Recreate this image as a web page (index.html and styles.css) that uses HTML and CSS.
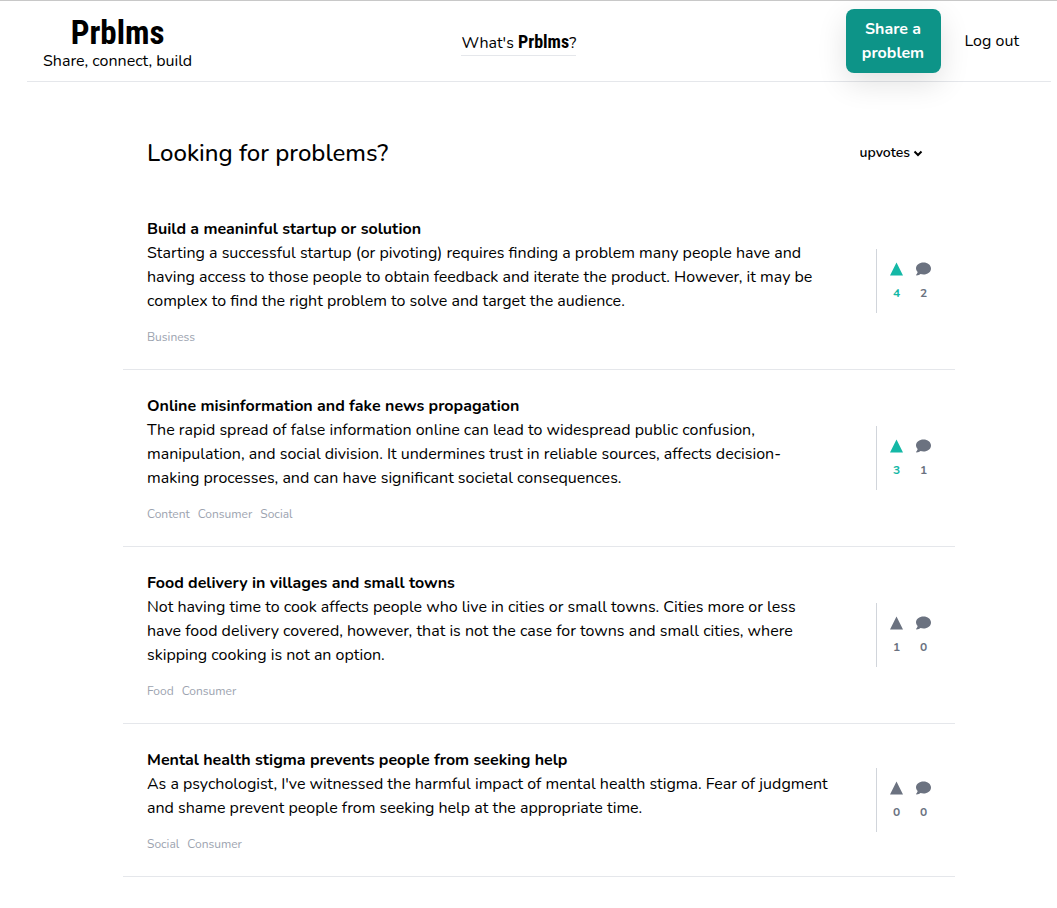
FILE: index.html
```html
<!DOCTYPE html>
<html lang="en">
<head>
<meta charset="utf-8">
<meta name="viewport" content="width=device-width, initial-scale=1">
<title>Prblms</title>
<link rel="stylesheet" href="styles.css">
</head>
<body>
<svg class="sprite" aria-hidden="true">
  <symbol id="up" viewBox="0 0 13 13"><path d="M6.500 0 13 13H0Z"/></symbol>
  <symbol id="comment" viewBox="0 0 16 14"><path d="M8 0C3.600 0 0 2.800 0 6.300c0 1.500.700 2.900 1.800 4-.3 1.300-.9 2.200-1.600 2.900-.3.300-.1.800.4.800 1.800 0 3.300-.8 4.200-1.600 1 .3 2.100.5 3.200.5 4.400 0 8-2.900 8-6.500S12.400 0 8 0Z"/></symbol>
</svg>
<header class="header">
  <a class="brand" href="#"><span class="logo">Prblms</span><span>Share, connect, build</span></a>
  <a class="about" href="#">What's <span class="wordmark">Prblms</span>?</a>
  <nav class="actions">
    <button class="share" type="button">Share a problem</button>
    <a class="logout" href="#">Log out</a>
  </nav>
</header>
<main class="main">
  <div class="heading">
    <h1 class="title">Looking for problems?</h1>
    <div class="sort">
      <select class="sort-select" aria-label="Sort by"><option>upvotes</option><option>newest</option></select>
      <svg class="chevron" viewBox="0 0 10 7" aria-hidden="true"><path d="m1.500 1.500 3.500 3.500 3.500-3.500"/></svg>
    </div>
  </div>
  <article class="item">
    <div class="content">
      <h2 class="name">Build a meaninful startup or solution</h2>
      <p class="text">Starting a successful startup (or pivoting) requires finding a problem many people have and having access to those people to obtain feedback and iterate the product. However, it may be complex to find the right problem to solve and target the audience.</p>
      <div class="tags"><span>Business</span></div>
    </div>
    <div class="stats">
      <button class="stat voted" type="button" aria-label="Upvote, 4"><svg class="up"><use href="#up"/></svg><span>4</span></button>
      <button class="stat" type="button" aria-label="Comments, 2"><svg class="comment"><use href="#comment"/></svg><span>2</span></button>
    </div>
  </article>
  <article class="item">
    <div class="content">
      <h2 class="name">Online misinformation and fake news propagation</h2>
      <p class="text">The rapid spread of false information online can lead to widespread public confusion, manipulation, and social division. It undermines trust in reliable sources, affects decision-making processes, and can have significant societal consequences.</p>
      <div class="tags"><span>Content</span><span>Consumer</span><span>Social</span></div>
    </div>
    <div class="stats">
      <button class="stat voted" type="button" aria-label="Upvote, 3"><svg class="up"><use href="#up"/></svg><span>3</span></button>
      <button class="stat" type="button" aria-label="Comments, 1"><svg class="comment"><use href="#comment"/></svg><span>1</span></button>
    </div>
  </article>
  <article class="item">
    <div class="content">
      <h2 class="name">Food delivery in villages and small towns</h2>
      <p class="text">Not having time to cook affects people who live in cities or small towns. Cities more or less have food delivery covered, however, that is not the case for towns and small cities, where skipping cooking is not an option.</p>
      <div class="tags"><span>Food</span><span>Consumer</span></div>
    </div>
    <div class="stats">
      <button class="stat" type="button" aria-label="Upvote, 1"><svg class="up"><use href="#up"/></svg><span>1</span></button>
      <button class="stat" type="button" aria-label="Comments, 0"><svg class="comment"><use href="#comment"/></svg><span>0</span></button>
    </div>
  </article>
  <article class="item">
    <div class="content">
      <h2 class="name">Mental health stigma prevents people from seeking help</h2>
      <p class="text">As a psychologist, I've witnessed the harmful impact of mental health stigma. Fear of judgment and shame prevent people from seeking help at the appropriate time.</p>
      <div class="tags"><span>Social</span><span>Consumer</span></div>
    </div>
    <div class="stats">
      <button class="stat" type="button" aria-label="Upvote, 0"><svg class="up"><use href="#up"/></svg><span>0</span></button>
      <button class="stat" type="button" aria-label="Comments, 0"><svg class="comment"><use href="#comment"/></svg><span>0</span></button>
    </div>
  </article>
</main>
</body>
</html>
```
FILE: styles.css
```css
* { box-sizing: border-box; }
body {
  margin: 0;
  padding-left: 21px;
  border-top: 1px solid #c8c8c8;
  background: #fff;
  color: #000;
  font: 16px/24px Nunito, Lato, sans-serif;
}
h1, h2, p { margin: 0; }
a { color: inherit; text-decoration: none; }
button, select { font: inherit; color: inherit; border: 0; background: none; padding: 0; cursor: pointer; }
.sprite { display: none; }
.header {
  display: flex;
  justify-content: space-between;
  align-items: center;
  max-width: 1024px;
  margin: 0 auto;
  padding: 8px 16px;
  border-bottom: 1px solid #e5e7eb;
}
.brand { display: flex; flex-direction: column; align-items: center; padding-top: 8px; }
.logo { font: bold 33px/32px "Roboto Condensed", Roboto, sans-serif; }
.about { padding-top: 4px; border-bottom: 1px solid #e5e7eb; }
.wordmark { font-family: "Roboto Condensed", Roboto, sans-serif; font-weight: bold; font-size: 18px; }
.actions { display: flex; align-items: center; gap: 8px; }
.share {
  width: 95px;
  padding: 8px 16px;
  border-radius: 8px;
  background: #0d9488;
  color: #fff;
  font-weight: bold;
  box-shadow: 0 10px 30px rgb(0 0 0 / 12%);
}
.logout { padding: 8px 16px; }
.main { max-width: 832px; margin: 0 auto; }
.heading { display: flex; align-items: center; justify-content: space-between; padding: 55px 24px 24px; }
.title { font-size: 24px; line-height: 32px; font-weight: 550; }
.sort { display: flex; align-items: center; gap: 3px; padding-right: 8px; font-size: 14px; font-weight: 600; }
.sort-select { appearance: none; field-sizing: content; }
.chevron { width: 10px; height: 7px; fill: none; stroke: #000; stroke-width: 2; }
.item {
  display: flex;
  align-items: center;
  justify-content: space-between;
  gap: 44px;
  padding: 24px;
  border-bottom: 1px solid #e5e7eb;
}
.content { flex: 1; }
.name { font-size: 16px; line-height: 24px; font-weight: bold; }
.tags { display: flex; gap: 8px; margin-top: 16px; color: #9ca3af; font-size: 12px; line-height: 16px; }
.stats { display: flex; gap: 13px; padding: 13px 0 12px 13px; border-left: 1px solid #d1d5db; color: #6b7280; }
.stat { display: flex; flex-direction: column; align-items: center; gap: 9px; font-size: 12px; line-height: 16px; font-weight: bold; }
.stat svg { height: 14px; fill: currentColor; }
.stat .up { width: 13px; }
.stat .comment { width: 15px; }
.voted { color: #14b8a6; }
```
